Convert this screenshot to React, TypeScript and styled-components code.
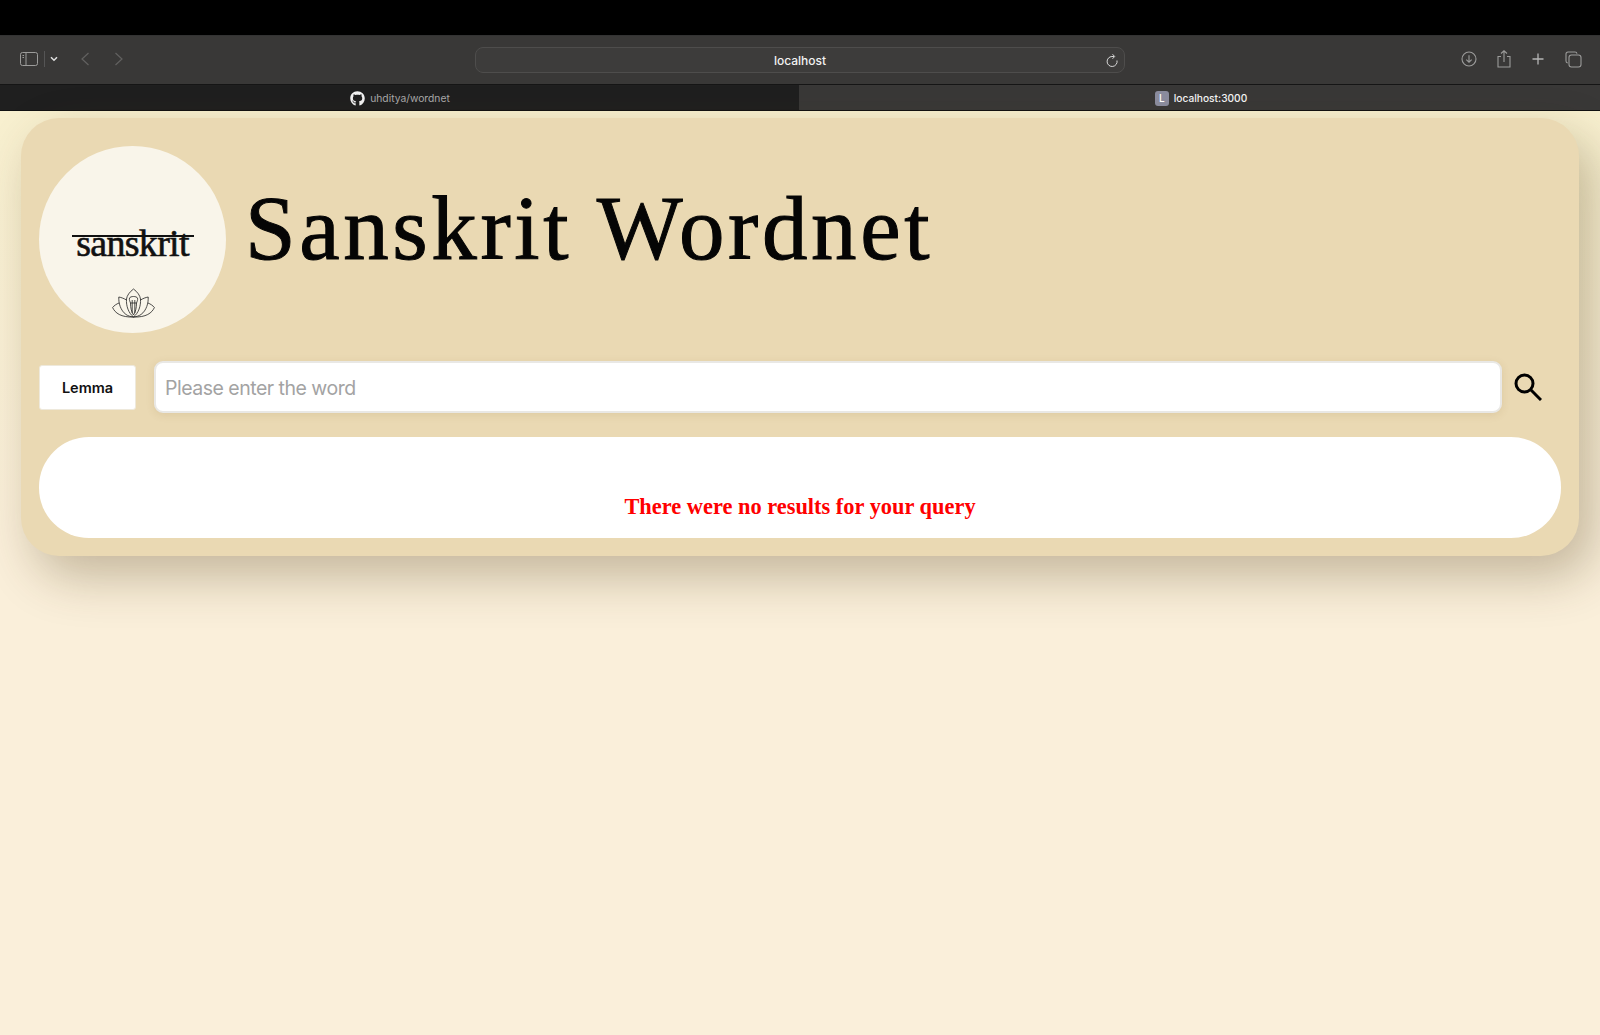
import React from "react";
import styled, { createGlobalStyle } from "styled-components";
import { FaGithub } from "react-icons/fa";

const Global = createGlobalStyle`
  html, body { margin: 0; padding: 0; height: 100%; background: #faefda; }
  #root { min-height: 100%; }
  * { box-sizing: border-box; }
`;

const Shell = styled.div`
  width: 1600px;
  height: 1035px;
  display: flex;
  flex-direction: column;
  overflow: hidden;
  font-family: Inter, "Liberation Sans", sans-serif;
`;

const TopStrip = styled.div`
  height: 36px;
  flex: none;
  background: #000;
  border-bottom: 1px solid #333;
`;

const Toolbar = styled.div`
  height: 48px;
  flex: none;
  background: #393837;
  display: grid;
  grid-template-columns: 475px 650px 1fr;
  align-items: center;
`;

const ToolLeft = styled.div`
  display: flex;
  align-items: center;
  padding: 0 0 2px 20px;
  height: 100%;
`;

const Divider = styled.div`
  width: 1px;
  height: 16px;
  background: #555;
  margin: 0 5px 0 6px;
`;

const ToolRight = styled.div`
  display: flex;
  align-items: center;
  justify-content: flex-end;
  gap: 18px;
  padding: 0 18px 2px 0;
`;

const Address = styled.div`
  height: 26px;
  border: 1px solid #4e4d4c;
  border-radius: 8px;
  background: #3d3c3b;
  color: #f2f2f2;
  font-size: 12px;
  font-weight: 500;
  display: flex;
  align-items: center;
  justify-content: center;
  position: relative;
`;

const Reload = styled.svg`
  position: absolute;
  right: 5px;
  top: 5px;
`;

const Tabs = styled.div`
  height: 27px;
  flex: none;
  display: grid;
  grid-template-columns: 799px 1fr;
  border-top: 1px solid #151515;
  border-bottom: 1px solid #111;
`;

const Tab = styled.div<{ $active?: boolean }>`
  background: ${(p) => (p.$active ? "#393837" : "#1f1f1f")};
  color: ${(p) => (p.$active ? "#f5f5f5" : "#a9a9a9")};
  font-size: ${(p) => (p.$active ? "10.2px" : "10.3px")};
  font-weight: ${(p) => (p.$active ? 500 : 400)};
  display: flex;
  align-items: center;
  justify-content: center;
  gap: 5px;
  padding: 1px 0 0 ${(p) => (p.$active ? "3px" : "1px")};
`;

const Favicon = styled.span`
  width: 14px;
  height: 15px;
  border-radius: 3px;
  background: #8c8d9f;
  color: #fff;
  font-size: 10px;
  display: flex;
  align-items: center;
  justify-content: center;
`;

const Page = styled.main`
  flex: 1;
  padding: 7px 21px 0;
  background: linear-gradient(180deg, #f8f0cf 0, #faefda 420px);
`;

const Card = styled.section`
  height: 438px;
  background: #ead9b3;
  border-radius: 38px;
  padding: 28px 18px 18px;
  box-shadow: 14px 20px 50px rgba(70, 50, 10, 0.3);
  display: flex;
  flex-direction: column;
`;

const Header = styled.header`
  display: flex;
  align-items: flex-start;
  gap: 19px;
`;

const Logo = styled.div`
  width: 187px;
  height: 187px;
  flex: none;
  border-radius: 50%;
  background: #f9f5ea;
  display: flex;
  flex-direction: column;
  align-items: center;
  position: relative;
`;

const LogoWord = styled.div`
  margin-top: 77px;
  width: 122px;
  height: 40px;
  position: relative;
  color: #111;
  font-family: "Liberation Serif", serif;
  font-weight: 400;
  font-size: 38px;
  line-height: 40px;
  letter-spacing: -0.7px;
  text-align: center;
  white-space: nowrap;
  -webkit-text-stroke: 0.6px #111;
  &::before {
    content: "";
    position: absolute;
    left: 0;
    right: 0;
    top: 12px;
    height: 2px;
    background: #111;
  }
`;

const Lotus = styled.svg`
  position: absolute;
  left: 73px;
  top: 142px;
`;

const Title = styled.h1`
  margin: 31px 0 0;
  color: #050505;
  font-family: "Liberation Serif", serif;
  font-weight: 400;
  font-size: 91px;
  line-height: 104px;
  letter-spacing: 3.6px;
  white-space: nowrap;
  -webkit-text-stroke: 1px #050505;
`;

const SearchRow = styled.div`
  margin-top: 28px;
  display: flex;
  align-items: center;
  height: 52px;
`;

const Lemma = styled.button`
  width: 97px;
  height: 45px;
  flex: none;
  border: 1px solid #eee9dc;
  border-radius: 3px;
  background: #fff;
  color: #111;
  font-family: Inter, sans-serif;
  font-size: 14.5px;
  font-weight: 600;
`;

const Query = styled.input`
  margin-left: 18px;
  width: 1348px;
  height: 52px;
  flex: none;
  border: 2px solid #e9e8e5;
  border-radius: 9px;
  background: #fff;
  padding: 1px 9px 0;
  font-family: Inter, sans-serif;
  font-size: 19.5px;
  letter-spacing: -0.5px;
  box-shadow: 0 2px 8px rgba(120, 90, 30, 0.12);
  &::placeholder { color: #a3a3a3; opacity: 1; }
`;

const SearchIcon = styled.svg`
  margin-left: 12px;
  flex: none;
`;

const Results = styled.div`
  margin-top: 24px;
  flex: 1;
  background: #fff;
  border-radius: 50px;
  display: flex;
  align-items: flex-end;
  justify-content: center;
  padding-bottom: 18px;
`;

const NoResults = styled.p`
  margin: 0;
  color: #ff0000;
  font-family: "Liberation Serif", serif;
  font-weight: 700;
  font-size: 22.4px;
  line-height: 26px;
`;

const Stroke = styled.svg`
  fill: none;
  stroke: ${(p) => p.color || "#9c9c9b"};
  flex: none;
`;

const ChevronBack = styled(Stroke)`
  margin-left: 22px;
`;

const ChevronForward = styled(Stroke)`
  margin-left: 24px;
`;

const TabsIcon = styled(Stroke)`
  margin-left: 2px;
`;

export default function App() {
  return (
    <Shell>
      <Global />
      <TopStrip />
      <Toolbar>
        <ToolLeft>
          <Stroke width="18" height="14" viewBox="0 0 18 14" strokeWidth="1">
            <rect x="0.5" y="0.5" width="17" height="13" rx="2" />
            <path d="M6 0.5v13" />
            <path d="M2.5 3.5h1.5M2.5 5.5h1.5" />
          </Stroke>
          <Divider />
          <Stroke width="8" height="6" viewBox="0 0 8 6" strokeWidth="1.5" color="#e0e0e0">
            <path d="M1 1.2l3 3 3-3" />
          </Stroke>
          <ChevronBack width="10" height="14" viewBox="0 0 10 14" strokeWidth="1.2" color="#626160">
            <path d="M8.5 1L2 7l6.5 6" />
          </ChevronBack>
          <ChevronForward width="10" height="14" viewBox="0 0 10 14" strokeWidth="1.2" color="#626160">
            <path d="M1.5 1L8 7l-6.5 6" />
          </ChevronForward>
        </ToolLeft>
        <Address>
          localhost
          <Reload width="14" height="16" viewBox="0 0 14 16" fill="none" stroke="#d8d8d8" strokeWidth="1">
            <path d="M12 7.5A5 5 0 1 1 7 3.5H9" />
            <path d="M7.5 1.2L9.7 3.5L7.5 5.8" />
          </Reload>
        </Address>
        <ToolRight>
          <Stroke width="16" height="16" viewBox="0 0 16 16" strokeWidth="1.1">
            <circle cx="8" cy="8" r="7" />
            <path d="M8 4.2v7M5.3 8.6L8 11.2l2.7-2.6" />
          </Stroke>
          <Stroke width="18" height="18" viewBox="0 0 18 18" strokeWidth="1.1">
            <path d="M6 6.5H3v10.5h12V6.5h-3" />
            <path d="M9 12V1M6 3.5L9 .8l3 2.7" />
          </Stroke>
          <Stroke width="14" height="14" viewBox="0 0 14 14" strokeWidth="1.3" color="#b5b5b5">
            <path d="M7 1.5v11M1.5 7h11" />
          </Stroke>
          <TabsIcon width="17" height="17" viewBox="0 0 17 17" strokeWidth="1.1">
            <rect x="4" y="4" width="12" height="12" rx="2.5" />
            <path d="M2.8 12A2 2 0 0 1 1 10V3a2 2 0 0 1 2-2h7a2 2 0 0 1 2 1.8" />
          </TabsIcon>
        </ToolRight>
      </Toolbar>
      <Tabs>
        <Tab>
          <FaGithub size={15} color="#f2f2f2" />
          uhditya/wordnet
        </Tab>
        <Tab $active>
          <Favicon>L</Favicon>
          localhost:3000
        </Tab>
      </Tabs>
      <Page>
        <Card>
          <Header>
            <Logo>
              <LogoWord>sanskrit</LogoWord>
              <Lotus width="43" height="30" viewBox="0 0 43 30" fill="none" stroke="#222" strokeWidth="0.8">
                <path d="M21.5 1C17.5 4 15 7.5 14.5 11C14 18 16.5 25 21.5 29C26.5 25 29 18 28.5 11C28 7.5 25.5 4 21.5 1Z" />
                <path d="M17.5 10C18.5 8 24.5 8 25.5 10C26 12 25 13.5 24.5 15C24.5 20 23.5 24 21.5 27C19.5 24 18.5 20 18.5 15C18 13.5 17 12 17.5 10Z" />
                <path d="M20.2 12V25M22.8 12V25M18.5 15H24.5" />
                <path d="M14.5 12C12 10.5 9.5 9.5 6.8 9C6.5 15 8.5 22.5 14 26.5C16 27.8 18 28.6 21.5 29" />
                <path d="M28.5 12C31 10.5 33.5 9.5 36.2 9C36.5 15 34.5 22.5 29 26.5C27 27.8 25 28.6 21.5 29" />
                <path d="M7 15C4.5 16 2.2 17.5 0.6 19.5C3 25 9 29.5 21.5 29C34 29.5 40 25 42.4 19.5C40.8 17.5 38.5 16 36 15" />
              </Lotus>
            </Logo>
            <Title>Sanskrit Wordnet</Title>
          </Header>
          <SearchRow>
            <Lemma type="button">Lemma</Lemma>
            <Query placeholder="Please enter the word" readOnly />
            <SearchIcon width="28" height="28" viewBox="0 0 28 28" fill="none" stroke="#000" strokeWidth="3">
              <circle cx="10.5" cy="10.5" r="8.5" />
              <path d="M16.5 16.5L27 27" />
            </SearchIcon>
          </SearchRow>
          <Results>
            <NoResults>There were no results for your query</NoResults>
          </Results>
        </Card>
      </Page>
    </Shell>
  );
}
